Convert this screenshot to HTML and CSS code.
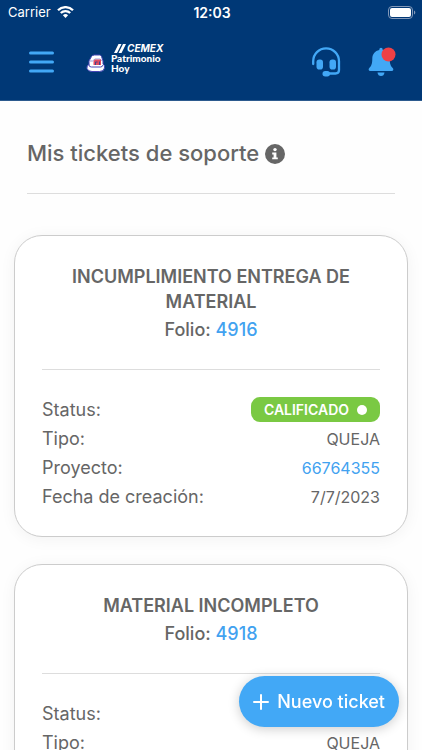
FILE: index.html
```html
<!DOCTYPE html>
<html lang="es">
<head>
<meta charset="utf-8">
<meta name="viewport" content="width=device-width, initial-scale=1">
<title>Mis tickets de soporte</title>
<link rel="stylesheet" href="styles.css">
</head>
<body>
<div class="app">
  <header class="header">
    <div class="status-bar">
      <div class="carrier">
        <span>Carrier</span>
        <svg width="17" height="12" viewBox="0 0 17 12" fill="none" stroke="#fff" stroke-width="2.3" aria-hidden="true">
          <path d="M1 4.2a10.7 10.7 0 0 1 15 0"/>
          <path d="M3.8 7a6.7 6.7 0 0 1 9.4 0"/>
          <path d="M8.500 12 5.900 9.300a3.700 3.700 0 0 1 5.200 0z" fill="#fff" stroke="none"/>
        </svg>
      </div>
      <time class="clock">12:03</time>
      <div class="battery">
        <svg width="28" height="13" viewBox="0 0 28 13" aria-hidden="true">
          <rect x=".5" y=".5" width="24" height="12" rx="3.500" fill="none" stroke="#8298b8"/>
          <rect x="2" y="2" width="21" height="9" rx="2" fill="#fff"/>
          <path d="M26 4.500v4c1.800-.7 1.800-3.300 0-4z" fill="#8298b8"/>
        </svg>
      </div>
    </div>
    <nav class="nav">
      <button class="icon-button" type="button" aria-label="Menú">
        <svg width="26" height="24" viewBox="0 0 26 24" stroke="#42a8f6" stroke-width="3" stroke-linecap="round" aria-hidden="true">
          <path d="M2.500 3h22M2.500 12h22M2.500 21h22"/>
        </svg>
      </button>
      <a class="brand" href="#" aria-label="CEMEX Patrimonio Hoy">
        <svg class="brand-house" width="20" height="19" viewBox="0 0 20 19" aria-hidden="true">
          <path d="M3 7 5.500 2.500Q6.500 1 8.500 1h5q1.500 0 2 1.500L17 7v3q2 1 1.500 4-.5 3.500-5 3.500H6q-4 0-5-3-.6-3 2-4z" fill="#fff" stroke="#4546b5" stroke-width="1"/>
          <path d="M3.500 7h3L9 5h5l2.500 2" fill="none" stroke="#9a9ad8" stroke-width="1"/>
          <path d="M7.500 7 9 5.500h6V11H7.500z" fill="#e04a62"/>
          <path d="M9.500 11V8h2M13.500 7.500V11" fill="none" stroke="#47418f" stroke-width="1"/>
          <path d="M3 10v1q0 2 2.500 2h9q2 0 2.500-2" fill="none" stroke="#4546b5" stroke-width="1"/>
        </svg>
        <span class="brand-text">
          <span class="brand-cemex">
            <svg width="12" height="9" viewBox="0 0 12 9" fill="#fff" aria-hidden="true"><path d="M0 9 4.500 0H7.500L3 9zM4.500 9 9 0h3L7.500 9z"/></svg>CEMEX
          </span>
          <span>Patrimonio</span>
          <span>Hoy</span>
        </span>
      </a>
      <div class="actions">
        <button class="icon-button" type="button" aria-label="Soporte">
          <svg width="30" height="30" viewBox="0 0 30 30" fill="none" stroke="#42a8f6" stroke-width="2.300" stroke-linecap="round" aria-hidden="true">
            <path d="M2.200 17v-2.800a12.900 12.900 0 0 1 25.800 0V23q0 3.500-3.500 3.500H17"/>
            <rect x="5.500" y="12.500" width="6.500" height="10" rx="2.800" fill="#42a8f6" stroke="none"/>
            <rect x="18.500" y="12.500" width="6.500" height="10" rx="2.800" fill="#42a8f6" stroke="none"/>
            <rect x="11.500" y="24" width="7.500" height="5.500" rx="2.700" fill="#42a8f6" stroke="none"/>
          </svg>
        </button>
        <button class="icon-button" type="button" aria-label="Notificaciones">
          <svg width="28" height="30" viewBox="0 0 28 30" fill="#42a8f6" aria-hidden="true">
            <path d="M11.300 3V2.500a1.700 1.700 0 0 1 3.400 0V3c4.300.8 7 4.200 7 8.500 0 5 .8 7.300 3.200 9.800.8.900.6 2.700-1.200 2.700H2.300c-1.800 0-2-1.800-1.200-2.700 2.400-2.500 3.200-4.800 3.200-9.800 0-4.300 2.700-7.700 7-8.500z"/>
            <path d="M9.500 25.500h7q-.5 3.500-3.500 3.500t-3.500-3.500z"/>
            <circle cx="20.500" cy="7.500" r="7" fill="#ef4045"/>
          </svg>
        </button>
      </div>
    </nav>
  </header>

  <main class="content">
    <div class="page-head">
      <h1>Mis tickets de soporte</h1>
      <button class="icon-button" type="button" aria-label="Información">
        <svg width="20" height="20" viewBox="0 0 20 20" aria-hidden="true">
          <circle cx="10" cy="10" r="10" fill="#666"/>
          <circle cx="10" cy="5.600" r="1.700" fill="#fff"/>
          <path d="M7.200 8.400h4.200v5h1.400v1.900H7.200v-1.900h1.400v-3H7.200z" fill="#fff"/>
        </svg>
      </button>
    </div>

    <article class="card">
      <h2>INCUMPLIMIENTO ENTREGA DE MATERIAL</h2>
      <p class="folio">Folio: <a href="#">4916</a></p>
      <dl class="details">
        <div class="row"><dt>Status:</dt><dd><span class="badge">CALIFICADO<span class="dot"></span></span></dd></div>
        <div class="row"><dt>Tipo:</dt><dd>QUEJA</dd></div>
        <div class="row"><dt>Proyecto:</dt><dd><a href="#">66764355</a></dd></div>
        <div class="row"><dt>Fecha de creación:</dt><dd>7/7/2023</dd></div>
      </dl>
    </article>

    <article class="card">
      <h2>MATERIAL INCOMPLETO</h2>
      <p class="folio">Folio: <a href="#">4918</a></p>
      <dl class="details">
        <div class="row"><dt>Status:</dt><dd></dd></div>
        <div class="row"><dt>Tipo:</dt><dd>QUEJA</dd></div>
      </dl>
    </article>
  </main>

  <button class="new-ticket" type="button">
    <svg width="16" height="16" viewBox="0 0 16 16" stroke="#fff" stroke-width="2" stroke-linecap="round" aria-hidden="true"><path d="M8 1v14M1 8h14"/></svg>
    Nuevo ticket
  </button>
</div>
</body>
</html>
```
FILE: styles.css
```css
* {
  box-sizing: border-box;
}

body,
h1,
h2,
p,
dl,
dd {
  margin: 0;
}

body {
  font-family: Inter, "Liberation Sans", sans-serif;
  color: #666;
  background: #fefefe;
}

a {
  color: #42a2f0;
  text-decoration: none;
}

button {
  font: inherit;
  border: 0;
  cursor: pointer;
}

svg {
  display: block;
  flex: none;
}

.app {
  display: flex;
  flex-direction: column;
  height: 100vh;
  overflow: hidden;
}

.header {
  flex: none;
  color: #fff;
  background: #003876;
  border-bottom: 1px solid #2c5a8e;
}

.status-bar {
  display: grid;
  grid-template-columns: 1fr auto 1fr;
  align-items: center;
  height: 24px;
  padding: 0 6px 0 8px;
  font-size: 13px;
}

.carrier {
  display: flex;
  align-items: center;
  gap: 6px;
}

.clock {
  font-size: 14px;
  font-weight: 600;
}

.battery {
  justify-self: end;
}

.nav {
  display: flex;
  align-items: center;
  height: 76px;
  padding: 0 26px 0 28px;
}

.icon-button {
  padding: 0;
  background: none;
}

.brand {
  display: flex;
  align-items: flex-end;
  gap: 5px;
  margin: 0 auto 8px 32px;
  color: #fff;
}

.brand-text {
  display: flex;
  flex-direction: column;
  font: 900 10px/10px Lato, sans-serif;
}

.brand-cemex {
  display: flex;
  align-items: center;
  gap: 1px;
  padding-left: 3px;
  font-family: Inter, sans-serif;
  font-style: italic;
  font-weight: 700;
}

.actions {
  display: flex;
  align-items: center;
  gap: 27px;
}

.content {
  flex: 1;
  min-height: 0;
  padding: 0 14px;
  overflow-y: auto;
  scrollbar-width: none;
}

.page-head {
  display: flex;
  align-items: center;
  gap: 6px;
  margin: 0 13px 41px;
  padding: 38px 0 25px;
  border-bottom: 1px solid #ddd;
}

.page-head h1 {
  font-size: 22px;
  line-height: 29px;
  font-weight: 500;
}

.card {
  margin-bottom: 27px;
  padding: 28px 27px 25px;
  background: #fff;
  border: 1px solid #ccc;
  border-radius: 28px;
  box-shadow: 0 2px 16px rgba(0, 0, 0, 0.05);
}

.card h2 {
  font-size: 18px;
  line-height: 25px;
  font-weight: 600;
  text-align: center;
}

.folio {
  margin-top: 4px;
  padding-bottom: 27px;
  border-bottom: 1px solid #ddd;
  font-size: 18px;
  line-height: 24px;
  font-weight: 500;
  text-align: center;
}

.details {
  margin-top: 25px;
}

.row {
  display: flex;
  align-items: center;
  justify-content: space-between;
  height: 29px;
  font-size: 18px;
}

.row dd {
  font-size: 16px;
}

.badge {
  display: flex;
  align-items: center;
  gap: 8px;
  height: 25px;
  padding: 0 13px;
  color: #fff;
  background: #7ac943;
  border-radius: 9px;
  font-size: 14px;
  font-weight: 600;
}

.dot {
  width: 10px;
  height: 10px;
  background: #fff;
  border-radius: 50%;
}

.new-ticket {
  position: fixed;
  right: 23px;
  bottom: 23px;
  display: flex;
  align-items: center;
  gap: 8px;
  height: 51px;
  padding: 0 14px;
  color: #fff;
  background: #42a8f6;
  border-radius: 26px;
  box-shadow: 0 2px 12px rgba(0, 0, 0, 0.2);
  font-size: 18px;
  font-weight: 500;
}
```
